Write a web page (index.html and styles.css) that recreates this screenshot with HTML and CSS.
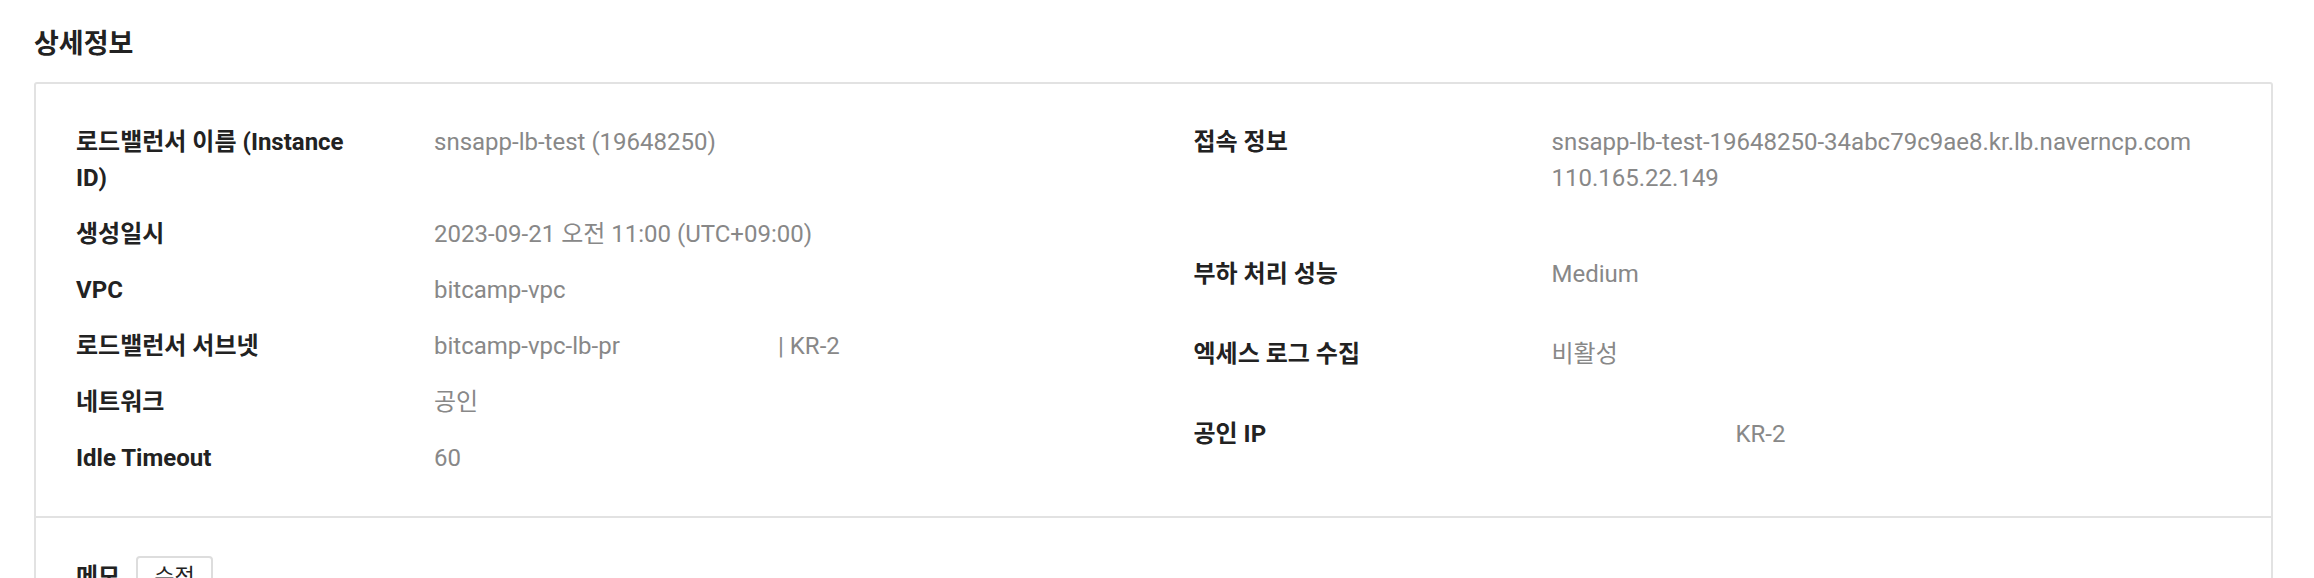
FILE: index.html
```html
<!DOCTYPE html>
<html lang="ko">
  <head>
    <meta charset="UTF-8" />
    <meta name="viewport" content="width=device-width, initial-scale=1.0" />
    <title>로드밸런서 상세정보</title>
    <link rel="stylesheet" href="styles.css">
  </head>
  <body>
    <main class="page">
      <h2 class="section-title">상세정보</h2>

      <div class="detail-box">
        <div class="detail-body">
          <dl class="detail-col">
            <div class="row">
              <dt>로드밸런서 이름 (Instance ID)</dt>
              <dd>snsapp-lb-test (19648250)</dd>
            </div>
            <div class="row">
              <dt>생성일시</dt>
              <dd>2023-09-21 오전 11:00 (UTC+09:00)</dd>
            </div>
            <div class="row">
              <dt>VPC</dt>
              <dd>bitcamp-vpc</dd>
            </div>
            <div class="row">
              <dt>로드밸런서 서브넷</dt>
              <dd><span class="subnet-name">bitcamp-vpc-lb-pr</span>| KR-2</dd>
            </div>
            <div class="row">
              <dt>네트워크</dt>
              <dd>공인</dd>
            </div>
            <div class="row">
              <dt>Idle Timeout</dt>
              <dd>60</dd>
            </div>
          </dl>

          <dl class="detail-col wide">
            <div class="row conn">
              <dt>접속 정보</dt>
              <dd>
                snsapp-lb-test-19648250-34abc79c9ae8.kr.lb.naverncp.com<br />
                110.165.22.149
              </dd>
            </div>
            <div class="row">
              <dt>부하 처리 성능</dt>
              <dd>Medium</dd>
            </div>
            <div class="row">
              <dt>엑세스 로그 수집</dt>
              <dd>비활성</dd>
            </div>
            <div class="row">
              <dt>공인 IP</dt>
              <dd><span class="ip-addr"></span>KR-2</dd>
            </div>
          </dl>
        </div>

        <div class="memo">
          <span class="memo-label">메모</span>
          <button class="btn">수정</button>
        </div>
      </div>
    </main>
  </body>
</html>
```

FILE: styles.css
```css
body {
  margin: 0;
  background-color: #fff;
  font-family: Roboto, "Noto Sans CJK KR", sans-serif;
  font-size: 24px;
  color: #222;
}

.page {
  padding: 26px 41px 0 34px;
}

.section-title {
  margin: 0 0 20px;
  font-size: 27px;
  line-height: 36px;
  font-weight: bold;
  color: #222;
}

.detail-box {
  border: 2px solid #e2e2e2;
  border-radius: 3px;
}

.detail-body {
  display: flex;
  padding: 40px 0 20px;
}

.detail-col {
  flex: 1;
  margin: 0;
  padding-left: 40px;
}

.row {
  display: flex;
  line-height: 36px;
  margin-bottom: 20px;
}

.row dt {
  flex: 0 0 358px;
  box-sizing: border-box;
  padding-right: 80px;
  font-weight: bold;
  color: #222;
}

.row dd {
  margin: 0;
  color: #888;
}

.wide .row {
  margin-bottom: 44px;
}

.wide .row.conn {
  margin-bottom: 60px;
}

.subnet-name {
  display: inline-block;
  width: 344px;
}

.ip-addr {
  display: inline-block;
  width: 184px;
}

.memo {
  display: flex;
  align-items: center;
  gap: 16px;
  border-top: 2px solid #e2e2e2;
  padding: 38px 40px 30px;
}

.memo-label {
  font-weight: bold;
  line-height: 36px;
}

.btn {
  padding: 4px 16px;
  font-family: inherit;
  font-size: 22px;
  line-height: 30px;
  color: #222;
  border: 2px solid #ddd;
  border-radius: 4px;
  background-color: #fff;
  cursor: pointer;
}
```
